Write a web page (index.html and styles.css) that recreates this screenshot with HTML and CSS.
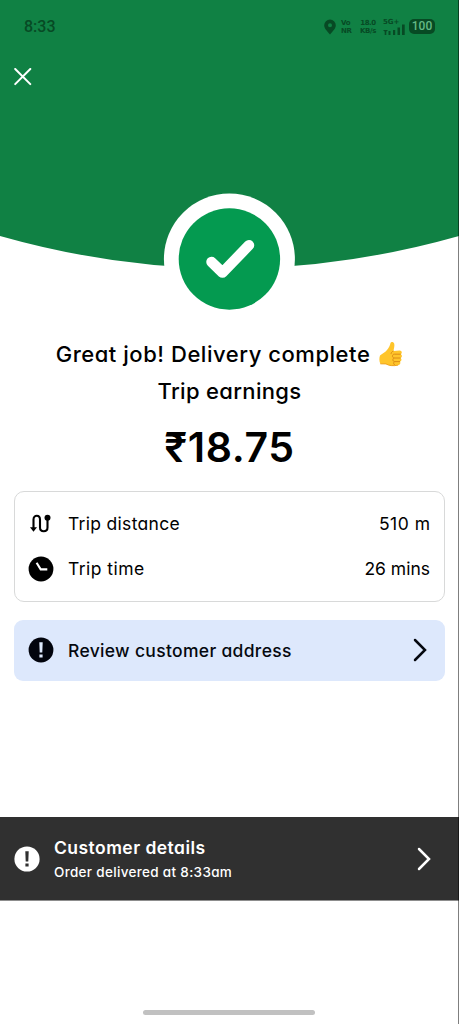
FILE: index.html
```html
<!DOCTYPE html>
<html lang="en">
<head>
<meta charset="utf-8">
<title>Delivery complete</title>
<link rel="stylesheet" href="styles.css">
</head>
<body>
<div class="screen">
  <header class="hero">
    <svg class="hero-art" width="459" height="330" viewBox="0 0 459 330" aria-hidden="true">
      <path d="M0 0H459V236Q229.500 301 0 236Z" fill="#108144"/>
      <circle cx="229.400" cy="259" r="65.500" fill="#fff"/>
      <circle cx="229.400" cy="259" r="50.700" fill="#049a50"/>
      <path d="M211.500 262L222.500 272.600L249 245.200" fill="none" stroke="#fff" stroke-width="10.500" stroke-linecap="round" stroke-linejoin="round"/>
    </svg>
    <div class="status">
      <span class="clock">8:33</span>
      <div class="status-icons">
        <svg class="pin" width="12" height="16" viewBox="0 0 12 16"><path fill-rule="evenodd" d="M6 .5A5.800 5.800 0 0 0 .2 6.300C.2 9.500 3 12 6 15.500C9 12 11.800 9.500 11.800 6.300A5.800 5.800 0 0 0 6 .5ZM6 4.200A2 2 0 1 1 6 8.200A2 2 0 1 1 6 4.200Z" fill="#074a24"/></svg>
        <span class="stack">Vo<br>NR</span>
        <span class="stack speed">18.0<br>KB/s</span>
        <span class="signal"><span class="net">5G+</span>
          <svg class="bars" width="22" height="11" viewBox="0 0 22 11"><path d="M0 6H5L2.500 8.500ZM1.700 7H3.300V11H1.700ZM5.500 7H7.500V11H5.500ZM10 6H12.200V11H10ZM14.500 3.500H17V11H14.500ZM19 .5H21.700V11H19Z" fill="#074a24"/></svg>
        </span>
        <span class="battery">100</span>
      </div>
    </div>
    <svg class="close" width="18" height="18" viewBox="0 0 18 18"><path d="M1.200 1L16.300 16.100M16.300 1L1.200 16.100" stroke="#fff" stroke-width="2" stroke-linecap="round"/></svg>
  </header>

  <main class="content">
    <h1 class="title"><span class="title-text">Great job! Delivery complete</span>
      <svg class="thumb" width="24" height="26" viewBox="0 0 24 26">
        <path d="M1 14.500C3 12.500 6 11.500 8 9C10 6.500 11 4 11.500 1.900C12 .5 14.800 .8 15.300 3C15.800 5.500 14.600 8 14.500 10L20.700 9.600C23 9.600 23.500 12.500 21.700 13.200C23.500 14 23.300 16.500 21.600 17C23 18 22.700 20.200 21 20.700C22 22 21.100 23.800 19.200 24.100C14 25.200 10 24.700 7 22.900L1.300 22.800C.2 20 .1 17 1 14.500Z" fill="#ffc52b"/>
        <path d="M14.500 10C12.700 10.600 12 12 12.100 13.100M21.700 13.200H15.300C12.900 13.200 12.900 16.900 15.300 17H21.600M15.300 17C13.400 17.300 13.400 20.500 15.600 20.600H21M15.600 20.600C14.200 21.200 14.300 23.500 16 24.200" fill="none" stroke="#dc8c16" stroke-width="1"/>
        <path d="M1.300 22.800L7 22.900C10 24.700 14 25.200 19.200 24.100" fill="none" stroke="#efa31c" stroke-width="1"/>
      </svg>
    </h1>
    <h2 class="subtitle">Trip earnings</h2>
    <div class="amount">₹18.75</div>

    <section class="card">
      <div class="row">
        <svg class="icon" width="26" height="26" viewBox="0 0 26 26"><path d="M5.500 18V8.500C5.500 3.500 12 3.500 12 8.500V16.500C12 21.500 19.500 21.500 19.500 16.500V7" fill="none" stroke="#000" stroke-width="2.100"/><path d="M2 16.200H9L5.500 20.800Z"/><circle cx="19.500" cy="6.800" r="3"/></svg>
        <span class="label distance">Trip distance</span><span class="value meters">510 m</span>
      </div>
      <div class="row">
        <svg class="icon" width="26" height="26" viewBox="0 0 26 26"><circle cx="13" cy="13" r="12.400"/><path d="M8.600 6.800L12.700 13.400H19.300" fill="none" stroke="#fff" stroke-width="2.100"/></svg>
        <span class="label time">Trip time</span><span class="value mins">26 mins</span>
      </div>
    </section>

    <section class="review">
      <svg class="icon" width="26" height="26" viewBox="0 0 26 26"><circle cx="13" cy="13" r="12.400" fill="#02040d"/><path d="M11.300 5.200H14.700L14.300 15.500H11.700ZM11.400 17.600H14.600V20.600H11.400Z" fill="#dde8fc"/></svg>
      <span class="label review-text">Review customer address</span>
      <svg class="chevron" width="14" height="24" viewBox="0 0 14 24"><path d="M2 2L12 12L2 22" fill="none" stroke="#05080f" stroke-width="2.500" stroke-linecap="round"/></svg>
    </section>
  </main>

  <section class="customer">
    <svg class="icon" width="26" height="26" viewBox="0 0 26 26"><circle cx="13" cy="13" r="12.600" fill="#fff"/><path d="M11.300 5.200H14.700L14.300 15.500H11.700ZM11.400 17.600H14.600V20.600H11.400Z" fill="#303030"/></svg>
    <div class="customer-copy">
      <span class="customer-title">Customer details</span>
      <span class="customer-sub">Order delivered at 8:33am</span>
    </div>
    <svg class="chevron" width="14" height="24" viewBox="0 0 14 24"><path d="M2 2L12 12L2 22" fill="none" stroke="#fff" stroke-width="2.500" stroke-linecap="round"/></svg>
  </section>
  <footer class="nav"><div class="handle"></div></footer>
  <div class="edge"></div>
</div>
</body>
</html>
```
FILE: styles.css
```css
* { box-sizing: border-box; }
body { margin: 0; background: #fff; font-family: Inter, "Noto Sans", sans-serif; font-feature-settings: "cv11"; color: #000; }
.screen { position: relative; width: 459px; height: 1024px; display: flex; flex-direction: column; overflow: hidden; }
.hero { position: relative; height: 330px; }
.hero-art { position: absolute; left: 0; top: 0; z-index: -1; }
.status { height: 53px; padding: 0 24px; display: flex; align-items: center; justify-content: space-between; color: #074a24; }
.clock { font: 500 16px/20px Roboto, sans-serif; }
.status-icons { display: flex; align-items: center; }
.stack { margin-left: 5px; width: 12px; font: 700 7px/8px "DejaVu Sans", sans-serif; letter-spacing: -.4px; }
.speed { width: 18px; margin-left: 6px; text-align: center; }
.signal { display: flex; flex-direction: column; width: 23px; margin-left: 6px; height: 16px; }
.net { font: 700 7px/7px "DejaVu Sans", sans-serif; }
.bars { display: block; margin-top: -2px; flex: none; }
.battery { width: 26px; height: 15px; margin-left: 3px; border-radius: 5px; background: #074a24; color: #63b985; font: 500 12px/15px Roboto, sans-serif; text-align: center; }
.close { display: block; margin: 15px 0 0 14px; }
.content { padding: 0 14px; height: 487px; }
.title { margin: 10px 0 0; height: 28px; display: flex; justify-content: center; align-items: center; gap: 9px; font-size: 22px; line-height: 28px; font-weight: 500; white-space: nowrap; }
.title-text { letter-spacing: .54px; }
.thumb { flex: none; }
.subtitle { margin: 9px 0 0; font-size: 22px; line-height: 28px; font-weight: 500; text-align: center; letter-spacing: .33px; }
.amount { margin-top: 17px; font-size: 41px; line-height: 50px; font-weight: 600; text-align: center; letter-spacing: .6px; }
.card { margin-top: 19px; height: 111px; padding: 9px 14px 11px 13px; border: 1px solid #d8d9d9; border-radius: 10px; }
.row { height: 45px; display: flex; align-items: center; font-size: 17.500px; }
.icon { flex: none; }
.label { margin-left: 14px; }
.distance { letter-spacing: .3px; }
.time { letter-spacing: .45px; }
.value { margin-left: auto; }
.meters { letter-spacing: .5px; margin-right: -.5px; }
.review { margin-top: 18px; height: 61px; padding: 0 18px 1px 14px; border-radius: 9px; background: #dde8fc; display: flex; align-items: center; font-size: 17.500px; font-weight: 500; color: #05080f; }
.review-text { letter-spacing: .32px; }
.chevron { margin-left: auto; flex: none; }
.customer { height: 84px; padding: 0 28px 0 14px; background: #303030; border-bottom: 1px solid #8d8d8d; color: #fff; display: flex; align-items: center; }
.customer-copy { margin-left: 14px; display: flex; flex-direction: column; gap: 2px; padding-top: 1px; }
.customer-title { font-size: 17.500px; line-height: 24px; font-weight: 600; letter-spacing: .45px; }
.customer-sub { font-size: 13.500px; line-height: 20px; font-weight: 500; letter-spacing: .32px; }
.nav { flex: 1; display: flex; align-items: flex-end; justify-content: center; padding: 0 2px 9px 0; }
.handle { width: 172px; height: 5px; border-radius: 3px; background: #c1c1c1; }
.edge { position: absolute; right: 0; top: 0; width: 1px; height: 1024px; background: rgba(0,0,0,.5); }
```
